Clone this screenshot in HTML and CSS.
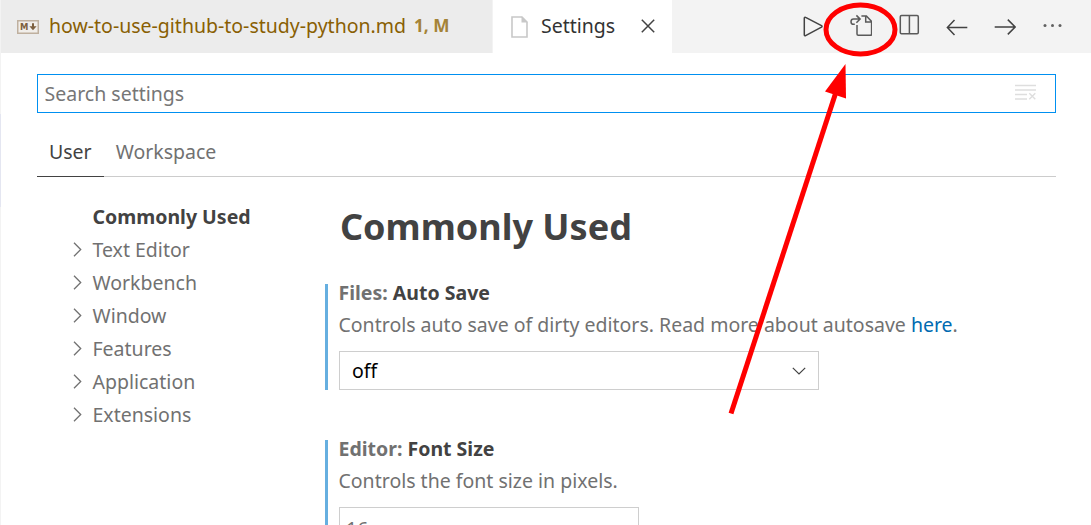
FILE: index.html
```html
<!DOCTYPE html>
<html lang="en">
<head>
<meta charset="utf-8">
<title>Settings</title>
<link rel="stylesheet" href="styles.css">
</head>
<body>
<div class="window">
  <div class="sidebar-edge"><div class="sidebar-selection"></div></div>
  <main class="editor">
    <header class="tabbar">
      <div class="tab tab-file">
        <svg class="md-icon" width="22" height="14" viewBox="0 0 22 14">
          <rect x=".75" y=".75" width="20.5" height="12.5" fill="#f1eeea" stroke="#bfb09f" stroke-width="1.5"/>
          <text class="md-letter" x="3" y="10.2" textLength="8.4" lengthAdjust="spacingAndGlyphs">M</text>
          <path d="M15 3.200h2v3h2.600L16 10.300 12.400 6.200H15z" fill="#7d6040"/>
        </svg>
        <span class="tab-name">how-to-use-github-to-study-python.md</span>
        <span class="tab-status">1, M</span>
      </div>
      <div class="tab tab-active">
        <svg class="file-icon" width="17" height="22" viewBox="0 0 17 22">
          <path d="M1 1h10l5 5v15H1z" fill="#fff" stroke="#c8c8c8" stroke-width="1.6"/>
          <path d="M10.500 .5v6h6z" fill="#c8c8c8"/>
        </svg>
        <span class="tab-name">Settings</span>
        <svg class="close-icon" width="14" height="14" viewBox="0 0 14 14"><path d="M.8.8l12.400 12.400M13.200.8.8 13.200" class="line"/></svg>
      </div>
      <div class="actions">
        <svg width="24" height="24" viewBox="0 0 24 24"><path d="M4.300 4.200v16.600c0 .9.600 1.200 1.300.8L21.500 13.200c.7-.4.7-1.100 0-1.500L5.600 3.400c-.7-.4-1.300-.1-1.300.8z" class="line"/></svg>
        <svg width="24" height="24" viewBox="0 0 24 24">
          <path d="M9 11v9.100c0 .7.500 1.200 1.200 1.200h12.200c.7 0 1.200-.5 1.200-1.200V7.400L18.400 2h-5M17.700 2v5.900h5.900" class="line soft"/>
          <path d="M6.800 10.300H5.600a2.600 2.600 0 0 1 0-5.200h6.200M8.400 1.400l3.700 3.700-3.700 3.700" class="line soft"/>
        </svg>
        <svg width="24" height="24" viewBox="0 0 24 24"><rect x="4.300" y="1.500" width="18" height="18.300" rx="1.200" class="line soft"/><path d="M13.400 1.500v18.300" class="line soft"/></svg>
        <svg width="24" height="24" viewBox="0 0 24 24"><path d="M23.300 13.500H3.400M10.500 6.100 3.400 13.500l7.100 7.400" class="line"/></svg>
        <svg width="24" height="24" viewBox="0 0 24 24"><path d="M2.700 13h20.200M15.800 5.600 23.100 13l-7.300 7.400" class="line"/></svg>
        <svg width="24" height="24" viewBox="0 0 24 24" fill="#616161"><circle cx="5" cy="11.500" r="1.500"/><circle cx="12.500" cy="11.500" r="1.500"/><circle cx="20" cy="11.500" r="1.500"/></svg>
      </div>
    </header>
    <section class="settings">
      <div class="search">
        <span>Search settings</span>
        <svg width="22" height="18" viewBox="0 0 22 18"><path d="M0 1.500h21M0 6h21M0 10.500h12M0 15h12M14.300 9.300l6 6M20.300 9.300l-6 6" fill="none" stroke="#dedede" stroke-width="1.400"/></svg>
      </div>
      <nav class="scopes">
        <span class="scope scope-active">User</span>
        <span class="scope">Workspace</span>
      </nav>
      <div class="body">
        <ul class="toc">
          <li class="toc-current">Commonly Used</li>
          <li><svg class="chevron" width="9" height="15" viewBox="0 0 9 15"><path d="M1 .8 7.700 7.500 1 14.200"/></svg>Text Editor</li>
          <li><svg class="chevron" width="9" height="15" viewBox="0 0 9 15"><path d="M1 .8 7.700 7.500 1 14.200"/></svg>Workbench</li>
          <li><svg class="chevron" width="9" height="15" viewBox="0 0 9 15"><path d="M1 .8 7.700 7.500 1 14.200"/></svg>Window</li>
          <li><svg class="chevron" width="9" height="15" viewBox="0 0 9 15"><path d="M1 .8 7.700 7.500 1 14.200"/></svg>Features</li>
          <li><svg class="chevron" width="9" height="15" viewBox="0 0 9 15"><path d="M1 .8 7.700 7.500 1 14.200"/></svg>Application</li>
          <li><svg class="chevron" width="9" height="15" viewBox="0 0 9 15"><path d="M1 .8 7.700 7.500 1 14.200"/></svg>Extensions</li>
        </ul>
        <div class="list">
          <h1>Commonly Used</h1>
          <article class="setting">
            <h2><span>Files:</span> Auto Save</h2>
            <p>Controls auto save of dirty editors. Read more about autosave <a>here</a>.</p>
            <div class="select"><span>off</span>
              <svg width="14" height="8" viewBox="0 0 14 8"><path d="M.8.8 7 7l6.200-6.200" class="line thin"/></svg>
            </div>
          </article>
          <article class="setting">
            <h2><span>Editor:</span> Font Size</h2>
            <p>Controls the font size in pixels.</p>
            <div class="number">16</div>
          </article>
        </div>
      </div>
    </section>
  </main>
  <svg class="annotation" width="1091" height="525" viewBox="0 0 1091 525">
    <ellipse cx="860.500" cy="29.500" rx="34.500" ry="24.500"/>
    <path d="M731 413.500 836 92"/>
    <path class="arrow-head" d="M845.500 64 825 91.500l21 7z"/>
  </svg>
</div>
</body>
</html>
```
FILE: styles.css
```css
* { box-sizing: border-box; }
body { margin: 0; background: #fff; color: #717171; font: 19.5px/27px "Noto Sans", sans-serif; }
.window { position: relative; display: flex; width: 1091px; height: 525px; overflow: hidden; }
.sidebar-edge { width: 1px; padding-top: 114px; background: #f3f3f3; }
.sidebar-selection { height: 93px; background: #e4e6f1; }
.editor { flex: 1; min-width: 0; }

.tabbar { display: flex; height: 53px; background: #f3f3f3; }
.tab { display: flex; align-items: center; white-space: nowrap; }
.tab-name { padding-bottom: 2px; }
.tab-file { width: 492px; padding-left: 16px; background: #ececec; border-right: 1px solid #f3f3f3; }
.tab-file .tab-name { margin-left: 10px; color: #895f03; }
.md-letter { font: bold 8.500px "DejaVu Sans", sans-serif; fill: #7d6040; }
.tab-status { margin-left: 8px; padding-bottom: 2px; color: #a48337; font-size: 17.200px; font-weight: 700; }
.tab-active { width: 179px; padding-left: 18px; background: #fff; color: #333; }
.tab-active .tab-name { margin-left: 13px; }
.close-icon { margin: 0 0 1px 26px; }
.line { fill: none; stroke: #424242; stroke-width: 1.500; }
.soft { stroke: #5a5a5a; }
.thin { stroke-width: 1.200; }
.actions { display: flex; align-items: center; gap: 24px; margin-left: 128px; padding-bottom: 1px; }

.settings { padding: 21px 35px 0 36px; }
.search { display: flex; align-items: center; justify-content: space-between; height: 39px; padding: 0 18px 2px 6.500px; border: 1px solid #0090f1; color: #767676; }
.search span { padding-top: 2px; }
.scopes { display: flex; height: 64px; padding-top: 15px; border-bottom: 1px solid #ccc; }
.scope { height: 49px; padding: 10px 12px 0; line-height: 27px; }
.scope-active { color: #424242; border-bottom: 1px solid #424242; }
.body { display: flex; }
.toc { width: 288px; margin: 0; padding: 23px 0 0 36px; list-style: none; }
.toc li { display: flex; align-items: center; height: 33px; }
.toc .toc-current { padding-left: 19.500px; font-weight: bold; color: #424242; }
.chevron { margin-right: 10.500px; fill: none; stroke: #717171; stroke-width: 1.300; }
.list { flex: 1; padding-top: 27px; }
h1 { margin: 0 0 34px 15px; font-size: 36px; line-height: 46px; color: #424242; }
.setting { height: 106px; margin-bottom: 50px; padding-left: 10.500px; border-left: 3px solid #66afe0; white-space: nowrap; }
h2 { margin: 0; font-size: 19.500px; line-height: 17px; color: #424242; }
h2 span { color: #717171; }
p { margin: 10px 0 13px; line-height: 27px; }
a { color: #006ab1; }
.select { display: flex; align-items: center; justify-content: space-between; width: 480px; height: 39px; margin-left: .5px; padding: 0 12px; border: 1px solid #cecece; color: #000; }
.number { width: 300px; height: 39px; margin-left: .5px; padding: 7px 6px; border: 1px solid #cecece; }
.annotation { position: absolute; inset: 0; fill: none; stroke: #f00; stroke-width: 5; }
.arrow-head { fill: #f00; stroke: none; }
```
